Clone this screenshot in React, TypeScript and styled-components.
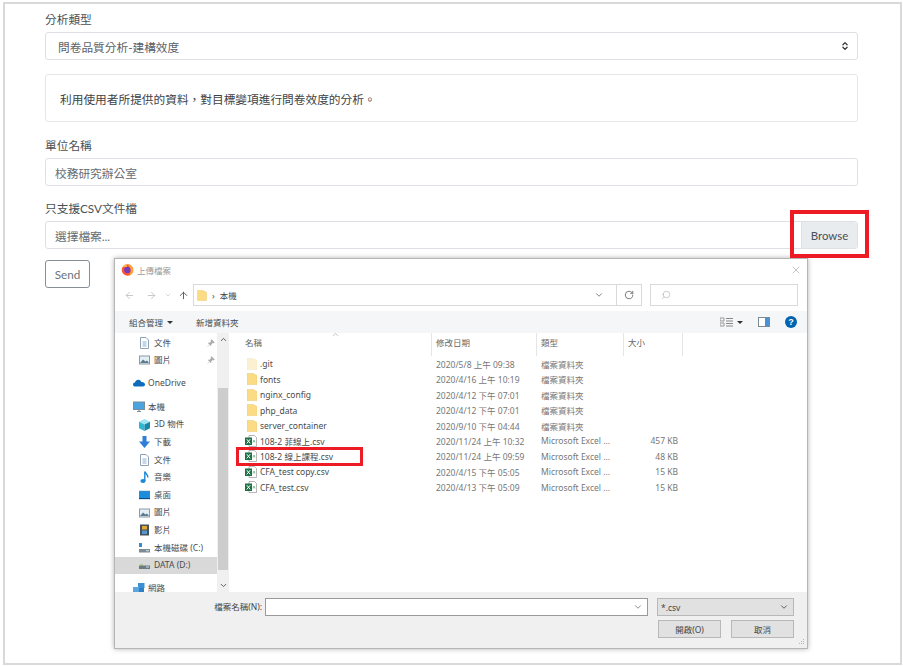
import { ReactNode } from "react";
import styled, { createGlobalStyle } from "styled-components";
import {
  ArrowLeft,
  ArrowRight,
  ArrowUp,
  ChevronDown,
  ChevronUp,
  ChevronsUpDown,
  RotateCw,
  Search,
  X,
} from "lucide-react";

const cjk = `"Noto Sans CJK TC", "Noto Sans CJK JP", sans-serif`;
const webFont = `Lato, ${cjk}`;
const winFont = `"Noto Sans", ${cjk}`;

const GlobalStyle = createGlobalStyle`
  html, body {
    margin: 0;
    background: #fff;
    overflow: hidden;
  }
  * {
    box-sizing: border-box;
  }
`;

const Page = styled.div`
  position: relative;
  width: 903px;
  height: 666px;
  padding: 2px 1px 1px 3px;
`;

const Frame = styled.div`
  height: 100%;
  border: 2px solid #d9d9d9;
  padding: 6px 42px 0 40px;
  font-family: ${webFont};
  font-size: 11.7px;
  color: #4a4f54;
`;

const Label = styled.div<{ $top?: number }>`
  height: 18px;
  line-height: 18px;
  margin-top: ${(p) => p.$top ?? 0}px;
  margin-bottom: 4px;
`;

const Control = styled.div`
  height: 28px;
  display: flex;
  align-items: center;
  padding-left: 9px;
  border: 1px solid #dde1e5;
  border-radius: 3px;
  color: #666c72;
  background: #fff;
`;

const SelectControl = styled(Control)`
  justify-content: space-between;
  padding: 0 7px 0 12px;
  color: #5b6167;
`;

const FileControl = styled(Control)`
  justify-content: space-between;
  padding-right: 0;
`;

const BrowseButton = styled.div`
  width: 56px;
  height: 100%;
  display: flex;
  align-items: center;
  justify-content: center;
  background: #e9ecef;
  border-left: 1px solid #dde1e5;
  border-radius: 0 3px 3px 0;
  font-size: 11.4px;
  color: #495057;
`;

const InfoBox = styled.div`
  height: 48px;
  margin-top: 14px;
  padding-left: 14px;
  display: flex;
  align-items: center;
  border: 1px solid #e4e7ea;
  border-radius: 3px;
  color: #3d4246;
`;

const SendButton = styled.div`
  width: 45px;
  height: 28px;
  margin-top: 11px;
  display: flex;
  align-items: center;
  justify-content: center;
  border: 1px solid #868e96;
  border-radius: 3px;
  color: #6c757d;
`;

const RedBox = styled.div<{ $x: number; $y: number; $w: number; $h: number; $thick: number }>`
  position: absolute;
  left: ${(p) => p.$x}px;
  top: ${(p) => p.$y}px;
  width: ${(p) => p.$w}px;
  height: ${(p) => p.$h}px;
  border: ${(p) => p.$thick}px solid #ed1c24;
  z-index: 2;
`;

const Dialog = styled.div`
  position: absolute;
  left: 114px;
  top: 258px;
  width: 694px;
  height: 391px;
  display: flex;
  flex-direction: column;
  background: #fff;
  border: 1px solid #b5b5b5;
  box-shadow: 0 0 5px rgba(0, 0, 0, 0.3);
  font-family: ${winFont};
  font-size: 8.5px;
  color: #555;
`;

const TitleBar = styled.div`
  height: 21px;
  flex: none;
  display: flex;
  align-items: center;
  gap: 3px;
  padding: 0 5px 0 6px;
  color: #9a9a9a;
`;

const TitleText = styled.span`
  flex: 1;
`;

const AddressRow = styled.div`
  height: 31px;
  flex: none;
  display: flex;
  align-items: flex-start;
  padding: 4px 9px 0 3px;
  color: #b9b9b9;
`;

const NavIcon = styled.span<{ $w: number; $dark?: boolean }>`
  width: ${(p) => p.$w}px;
  height: 22px;
  display: flex;
  align-items: center;
  justify-content: center;
  color: ${(p) => (p.$dark ? "#555" : "#c4c4c4")};
`;

const AddressBox = styled.div`
  width: 449px;
  height: 22px;
  display: flex;
  align-items: center;
  gap: 5px;
  padding-left: 3px;
  border: 1px solid #d9d9d9;
  color: #444;
`;

const AddressPath = styled.span`
  flex: 1;
`;

const AddressButton = styled.span<{ $line?: boolean }>`
  width: ${(p) => (p.$line ? 25 : 24)}px;
  height: 100%;
  display: flex;
  align-items: center;
  justify-content: center;
  color: #666;
  border-left: ${(p) => (p.$line ? "1px solid #d9d9d9" : "none")};
`;

const SearchBox = styled.div`
  width: 148px;
  height: 22px;
  margin-left: 8px;
  padding-left: 10px;
  display: flex;
  align-items: center;
  border: 1px solid #d9d9d9;
  color: #a99;
`;

const CommandBar = styled.div`
  height: 22px;
  flex: none;
  display: flex;
  align-items: center;
  padding: 0 10px 0 14px;
  background: #f5f6f7;
  color: #4a4a4a;
`;

const Caret = styled.span`
  width: 0;
  height: 0;
  margin: 1px 0 0 4px;
  border: 3px solid transparent;
  border-top: 3px solid #333;
  border-bottom: none;
`;

const CommandItem = styled.span`
  display: flex;
  align-items: center;
  margin-right: 23px;
`;

const CommandSpacer = styled.span`
  flex: 1;
`;

const ToolIcons = styled.span`
  display: flex;
  align-items: center;
  gap: 15px;
`;

const ViewToggle = styled.span`
  display: flex;
  align-items: center;
`;

const HelpDot = styled.span`
  width: 12px;
  height: 12px;
  display: flex;
  align-items: center;
  justify-content: center;
  border-radius: 50%;
  background: #0063b1;
  color: #fff;
  font-size: 9px;
  font-weight: 700;
  font-family: "Liberation Sans", sans-serif;
`;

const Body = styled.div`
  flex: 1;
  min-height: 0;
  display: flex;
  overflow: hidden;
`;

const Sidebar = styled.div`
  width: 102px;
  flex: none;
  overflow: hidden;
  padding-top: 1px;
`;

const SideRow = styled.div<{ $indent?: boolean; $active?: boolean; $gap?: number }>`
  height: 17.6px;
  margin-top: ${(p) => p.$gap ?? 0}px;
  display: flex;
  align-items: center;
  gap: ${(p) => (p.$indent ? 4 : 3)}px;
  padding-left: ${(p) => (p.$indent ? 24 : 18)}px;
  background: ${(p) => (p.$active ? "#d9d9d9" : "transparent")};
  color: #4a4a4a;
  line-height: 1;
  white-space: nowrap;
`;

const SideLabel = styled.span`
  flex: 1;
`;

const PinMark = styled.svg`
  margin-right: 2px;
`;

const Scroller = styled.div`
  width: 12px;
  flex: none;
  display: flex;
  flex-direction: column;
  background: #f0f0f0;
  color: #555;
`;

const ScrollArrow = styled.div`
  height: 14px;
  display: flex;
  align-items: center;
  justify-content: center;
`;

const ScrollSpace = styled.div<{ $h: number }>`
  height: ${(p) => p.$h}px;
`;

const ScrollThumb = styled.div`
  height: 184px;
  margin: 0 1px;
  background: #cdcdcd;
`;

const FileList = styled.div`
  flex: 1;
  min-width: 0;
`;

const columns = "203px 105px 87px 59px";

const HeaderRow = styled.div`
  position: relative;
  height: 23.3px;
  display: grid;
  grid-template-columns: ${columns};
`;

const HeaderCell = styled.div<{ $name?: boolean }>`
  padding: 3px 0 0 ${(p) => (p.$name ? 16 : 4)}px;
  border-right: 1px solid #e5e5e5;
  color: #666;
`;

const SortMark = styled.span`
  position: absolute;
  left: 102px;
  top: -3px;
  color: #999;
  display: flex;
`;

const FileRow = styled.div`
  height: 15.4px;
  display: grid;
  grid-template-columns: ${columns};
  align-items: center;
  white-space: nowrap;
`;

const NameCell = styled.div`
  display: flex;
  align-items: center;
  gap: 3px;
  padding-left: 16px;
  color: #4a4a4a;
`;

const IconSlot = styled.span`
  width: 12px;
  display: flex;
  justify-content: flex-end;
`;

const DataCell = styled.div<{ $right?: boolean }>`
  padding: ${(p) => (p.$right ? "0 5px 0 0" : "0 0 0 4px")};
  text-align: ${(p) => (p.$right ? "right" : "left")};
  color: #777;
`;

const Footer = styled.div`
  position: relative;
  height: 56px;
  flex: none;
  padding: 6px 13px 0 0;
  background: #f0f0f0;
  display: grid;
  grid-template-columns: 1fr 383px 137px;
  grid-template-rows: 18px 18px;
  column-gap: 9px;
  row-gap: 4px;
  color: #444;
`;

const FileLabel = styled.div`
  text-align: right;
  line-height: 18px;
  margin-right: -6px;
`;

const FileInput = styled.div`
  display: flex;
  align-items: center;
  justify-content: flex-end;
  padding-right: 4px;
  border: 1px solid #9a9a9a;
  background: #fff;
  color: #777;
`;

const TypeSelect = styled.div`
  display: flex;
  align-items: center;
  justify-content: space-between;
  padding: 0 4px 0 3px;
  border: 1px solid #b8b8b8;
  background: #e1e1e1;
  color: #444;
`;

const DialogButtons = styled.div`
  grid-column: 3;
  display: flex;
  justify-content: space-between;
  padding-left: 1px;
`;

const DialogButton = styled.div`
  width: 63px;
  display: flex;
  align-items: center;
  justify-content: center;
  border: 1px solid #b8b8b8;
  background: #e1e1e1;
  color: #444;
`;

const Grip = styled.svg`
  position: absolute;
  right: 2px;
  bottom: 2px;
`;

function FirefoxIcon() {
  return (
    <svg width="13" height="13" viewBox="0 0 13 13">
      <circle cx="6.5" cy="7" r="5.8" fill="#ff5634" />
      <path d="M6.5 1C10 1.6 12.4 4 12.2 7.5 12 10.6 9.5 12.8 6.5 12.8 9 11.5 10 9.5 9.5 7 9 4.5 7.5 3 6.5 1Z" fill="#ffa436" />
      <circle cx="6.3" cy="7" r="3.2" fill="#7a3bb8" />
      <path d="M2 3.5C3 2 4.5 1 6 .8 5.4 2 5.4 3 6 3.8 4.5 4 3.2 4.4 2 3.5Z" fill="#ffbd4f" />
    </svg>
  );
}

function FolderIcon({ faded, w = 10, h = 12 }: { faded?: boolean; w?: number; h?: number }) {
  return (
    <svg width={w} height={h} viewBox="0 0 10 12">
      <path d="M0 .5H6L10 2.5V11.5H0Z" fill={faded ? "#fbf0cf" : "#fbdc85"} stroke={faded ? "#f3e6c0" : "#e9c76c"} strokeWidth=".5" />
    </svg>
  );
}

function ExcelIcon() {
  return (
    <svg width="12" height="12" viewBox="0 0 12 12">
      <path d="M4 .5H9.5L11.5 2.5V11.5H4Z" fill="#fff" stroke="#9a9a9a" strokeWidth=".7" />
      <rect x="0" y="2.5" width="7" height="7.5" fill="#1e7145" />
      <path d="M1.8 4.2 5.2 8.4M5.2 4.2 1.8 8.4" stroke="#fff" strokeWidth="1" />
      <path d="M8 7.5 9 5 10 7.5" stroke="#5bb286" strokeWidth=".8" fill="none" />
    </svg>
  );
}

type SideKind = "doc" | "picture" | "cloud" | "pc" | "cube" | "down" | "music" | "desktop" | "video" | "disk" | "data" | "net";

function SideIcon({ kind }: { kind: SideKind }) {
  switch (kind) {
    case "doc":
      return (
        <svg width="11" height="12" viewBox="0 0 11 12">
          <path d="M1.5 .5H7L9.5 3V11.5H1.5Z" fill="#fff" stroke="#8fa3b5" />
          <path d="M3.5 5H7.5M3.5 7H7.5M3.5 9H7.5" stroke="#6d9ac4" strokeWidth=".8" />
        </svg>
      );
    case "picture":
      return (
        <svg width="11" height="12" viewBox="0 0 11 10">
          <rect x=".5" y="1" width="10" height="8" fill="#e4eef5" stroke="#8b9aa7" />
          <path d="M1 8 4 4.5 6.5 6.5 8 5.5 10 8Z" fill="#5d7b8e" />
        </svg>
      );
    case "cloud":
      return (
        <svg width="12" height="12" viewBox="0 0 12 8">
          <path d="M2.5 7.5C.8 7.5 0 6.5 0 5.4 0 4.2 1 3.4 2 3.5 2.5 1.6 4 .6 5.6.8 7 1 8 2 8.3 3 10.4 2.8 12 4 12 5.5 12 6.8 11 7.5 10 7.5Z" fill="#0f6cbd" />
        </svg>
      );
    case "pc":
      return (
        <svg width="12" height="12" viewBox="0 0 12 12">
          <rect x=".5" y="1" width="11" height="7.5" fill="#4aa4e0" stroke="#7a8c9a" />
          <path d="M4 10.5H8M6 8.5V10.5" stroke="#7a8c9a" strokeWidth="1.2" />
        </svg>
      );
    case "cube":
      return (
        <svg width="11" height="12" viewBox="0 0 11 12">
          <path d="M5.5 0 11 2.8 5.5 5.6 0 2.8Z" fill="#9fe4f2" />
          <path d="M0 2.8 5.5 5.6V12L0 9.2Z" fill="#2fb6d4" />
          <path d="M11 2.8 5.5 5.6V12L11 9.2Z" fill="#1b87a8" />
        </svg>
      );
    case "down":
      return (
        <svg width="11" height="12" viewBox="0 0 11 12">
          <path d="M3.5 0H7.5V5.5H11L5.5 12 0 5.5H3.5Z" fill="#2f7fd6" />
        </svg>
      );
    case "music":
      return (
        <svg width="11" height="12" viewBox="0 0 11 12">
          <ellipse cx="4" cy="10" rx="2.6" ry="2" fill="#1e88d8" />
          <path d="M5.8 10V.5C6.6 2.8 9 3.2 9 6.4" fill="none" stroke="#1e88d8" strokeWidth="1.4" />
        </svg>
      );
    case "desktop":
      return (
        <svg width="11" height="12" viewBox="0 0 11 10">
          <rect x="0" y="1" width="11" height="8" fill="#1c8ddc" stroke="#6a8ba3" strokeWidth=".5" />
          <rect x="0" y="8" width="11" height="1" fill="#0b4f8a" />
        </svg>
      );
    case "video":
      return (
        <svg width="11" height="12" viewBox="0 0 9 12">
          <rect x="0" y=".5" width="9" height="11" fill="#45535e" />
          <rect x="2" y="2" width="5" height="3.5" fill="#e6a634" />
          <rect x="2" y="6.5" width="5" height="3.5" fill="#5a96c9" />
        </svg>
      );
    case "disk":
      return (
        <svg width="11" height="12" viewBox="0 0 11 12">
          <rect x="0" y="1" width="3" height="4" fill="#2e8fd6" />
          <rect x="0" y="7" width="11" height="3.5" fill="#7b8b96" />
          <rect x="7" y="8.2" width="3" height="1" fill="#cfe3ee" />
        </svg>
      );
    case "data":
      return (
        <svg width="11" height="12" viewBox="0 0 11 12">
          <rect x="0" y="6.5" width="11" height="3.5" fill="#6c7a84" />
          <rect x="1" y="5.5" width="3" height="1" fill="#7fb069" />
          <rect x="7" y="7.5" width="3" height="1" fill="#cfe3ee" />
        </svg>
      );
    case "net":
      return (
        <svg width="12" height="10" viewBox="0 0 12 10">
          <rect x="5" y="0" width="6.5" height="5" fill="#3d8fd4" />
          <rect x="0" y="4" width="6.5" height="5" fill="#5ba6e0" />
          <rect x="6" y="5" width="5" height="4" fill="#2f7fc4" />
        </svg>
      );
  }
}

function PinIcon() {
  return (
    <PinMark width="8" height="8" viewBox="0 0 8 8">
      <path d="M4.5 .5 7.5 3.5 6.5 4 5.5 3.8 4 5.5 4 6.8 1.2 4 2.5 4 4.2 2.5 4 1.5ZM2.5 5.5.5 7.5" fill="#a9a9a9" stroke="#a9a9a9" strokeWidth=".5" />
    </PinMark>
  );
}

const sideItems: { kind: SideKind; label: string; indent?: boolean; pin?: boolean; active?: boolean; gap?: number }[] = [
  { kind: "doc", label: "文件", indent: true, pin: true },
  { kind: "picture", label: "圖片", indent: true, pin: true },
  { kind: "cloud", label: "OneDrive", gap: 5.5 },
  { kind: "pc", label: "本機", gap: 6 },
  { kind: "cube", label: "3D 物件", indent: true },
  { kind: "down", label: "下載", indent: true },
  { kind: "doc", label: "文件", indent: true },
  { kind: "music", label: "音樂", indent: true },
  { kind: "desktop", label: "桌面", indent: true },
  { kind: "picture", label: "圖片", indent: true },
  { kind: "video", label: "影片", indent: true },
  { kind: "disk", label: "本機磁碟 (C:)", indent: true },
  { kind: "data", label: "DATA (D:)", indent: true, active: true },
  { kind: "net", label: "網路", gap: 5 },
];

const files: { name: string; date: string; excel?: boolean; faded?: boolean; size?: string }[] = [
  { name: ".git", date: "2020/5/8 上午 09:38", faded: true },
  { name: "fonts", date: "2020/4/16 上午 10:19" },
  { name: "nginx_config", date: "2020/4/12 下午 07:01" },
  { name: "php_data", date: "2020/4/12 下午 07:01" },
  { name: "server_container", date: "2020/9/10 下午 04:44" },
  { name: "108-2 菲線上.csv", date: "2020/11/24 上午 10:32", excel: true, size: "457 KB" },
  { name: "108-2 線上課程.csv", date: "2020/11/24 上午 09:59", excel: true, size: "48 KB" },
  { name: "CFA_test copy.csv", date: "2020/4/15 下午 05:05", excel: true, size: "15 KB" },
  { name: "CFA_test.csv", date: "2020/4/13 下午 05:09", excel: true, size: "15 KB" },
];

function Field({ label, top, children }: { label: string; top?: number; children: ReactNode }) {
  return (
    <>
      <Label $top={top}>{label}</Label>
      {children}
    </>
  );
}

export default function App() {
  return (
    <Page>
      <GlobalStyle />
      <Frame>
        <Field label="分析類型">
          <SelectControl>
            問卷品質分析-建構效度
            <ChevronsUpDown size={10} strokeWidth={3} color="#333" />
          </SelectControl>
        </Field>
        <InfoBox>利用使用者所提供的資料，對目標變項進行問卷效度的分析。</InfoBox>
        <Field label="單位名稱" top={14}>
          <Control>校務研究辦公室</Control>
        </Field>
        <Field label="只支援CSV文件檔" top={13}>
          <FileControl>
            選擇檔案...
            <BrowseButton>Browse</BrowseButton>
          </FileControl>
        </Field>
        <SendButton>Send</SendButton>
      </Frame>

      <RedBox $x={790} $y={210} $w={79} $h={48} $thick={4} />
      <RedBox $x={236} $y={447} $w={127} $h={19} $thick={3} />

      <Dialog>
        <TitleBar>
          <FirefoxIcon />
          <TitleText>上傳檔案</TitleText>
          <X size={12} strokeWidth={1} color="#888" />
        </TitleBar>
        <AddressRow>
          <NavIcon $w={22}>
            <ArrowLeft size={11} />
          </NavIcon>
          <NavIcon $w={22}>
            <ArrowRight size={11} />
          </NavIcon>
          <NavIcon $w={12}>
            <ChevronDown size={8} />
          </NavIcon>
          <NavIcon $w={19} $dark>
            <ArrowUp size={11} />
          </NavIcon>
          <AddressBox>
            <FolderIcon w={10} h={11} />
            <span>›</span>
            <AddressPath>本機</AddressPath>
            <AddressButton>
              <ChevronDown size={10} />
            </AddressButton>
            <AddressButton $line>
              <RotateCw size={10} />
            </AddressButton>
          </AddressBox>
          <SearchBox>
            <Search size={10} strokeWidth={1.2} style={{ transform: "scaleX(-1)" }} />
          </SearchBox>
        </AddressRow>
        <CommandBar>
          <CommandItem>
            組合管理
            <Caret />
          </CommandItem>
          <CommandItem>新增資料夾</CommandItem>
          <CommandSpacer />
          <ToolIcons>
            <ViewToggle>
              <svg width="13" height="10" viewBox="0 0 13 10">
                <path d="M0 1H4V4H0ZM0 6H4V9H0Z" fill="none" stroke="#999" />
                <path d="M6 1.5H13M6 4H13M6 6.5H13M6 9H13" stroke="#888" />
              </svg>
              <Caret />
            </ViewToggle>
            <svg width="12" height="10" viewBox="0 0 12 10">
              <rect x=".5" y=".5" width="11" height="9" fill="#fff" stroke="#7b8a96" />
              <rect x="7" y="1" width="4" height="8" fill="#4a90d9" />
            </svg>
            <HelpDot>?</HelpDot>
          </ToolIcons>
        </CommandBar>
        <Body>
          <Sidebar>
            {sideItems.map((item, i) => (
              <SideRow key={i} $indent={item.indent} $active={item.active} $gap={item.gap}>
                <SideIcon kind={item.kind} />
                <SideLabel>{item.label}</SideLabel>
                {item.pin && <PinIcon />}
              </SideRow>
            ))}
          </Sidebar>
          <Scroller>
            <ScrollArrow>
              <ChevronUp size={9} strokeWidth={2.5} />
            </ScrollArrow>
            <ScrollSpace $h={41} />
            <ScrollThumb />
            <ScrollSpace $h={8} />
            <ScrollArrow>
              <ChevronDown size={9} strokeWidth={2.5} />
            </ScrollArrow>
          </Scroller>
          <FileList>
            <HeaderRow>
              <SortMark>
                <ChevronUp size={9} strokeWidth={1.5} />
              </SortMark>
              <HeaderCell $name>名稱</HeaderCell>
              <HeaderCell>修改日期</HeaderCell>
              <HeaderCell>類型</HeaderCell>
              <HeaderCell>大小</HeaderCell>
            </HeaderRow>
            {files.map((file) => (
              <FileRow key={file.name}>
                <NameCell>
                  <IconSlot>{file.excel ? <ExcelIcon /> : <FolderIcon faded={file.faded} />}</IconSlot>
                  {file.name}
                </NameCell>
                <DataCell>{file.date}</DataCell>
                <DataCell>{file.excel ? "Microsoft Excel ..." : "檔案資料夾"}</DataCell>
                <DataCell $right>{file.size}</DataCell>
              </FileRow>
            ))}
          </FileList>
        </Body>
        <Footer>
          <FileLabel>檔案名稱(N):</FileLabel>
          <FileInput>
            <ChevronDown size={10} />
          </FileInput>
          <TypeSelect>
            *.csv
            <ChevronDown size={10} />
          </TypeSelect>
          <DialogButtons>
            <DialogButton>開啟(O)</DialogButton>
            <DialogButton>取消</DialogButton>
          </DialogButtons>
          <Grip width="8" height="8" viewBox="0 0 8 8">
            <path d="M6 1h1v1H6ZM4 3h1v1H4ZM6 3h1v1H6ZM2 5h1v1H2ZM4 5h1v1H4ZM6 5h1v1H6Z" fill="#b5b5b5" />
          </Grip>
        </Footer>
      </Dialog>
    </Page>
  );
}
